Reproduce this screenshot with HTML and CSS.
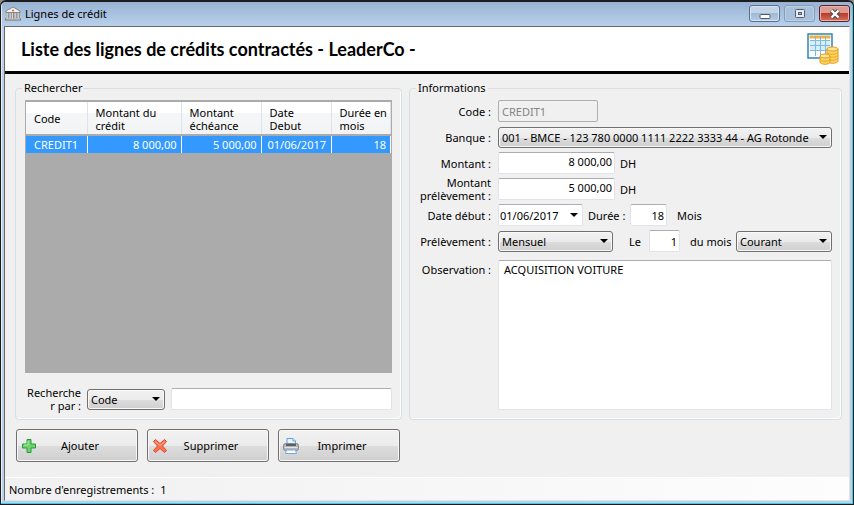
FILE: index.html
```html
<!DOCTYPE html>
<html lang="fr">
<head>
    <meta charset="UTF-8">
    <meta name="viewport" content="width=device-width, initial-scale=1.0">
    <title>Lignes de crédit</title>
    <link rel="stylesheet" href="styles.css">
</head>
<body>
    <div class="window">
        <header class="titlebar">
            <svg class="app-icon" viewBox="0 0 16 14">
                <path d="M8 0 L15 4 V5.500 H1 V4 Z" fill="#f4f1ec" stroke="#77706a" stroke-width=".8"/>
                <path d="M2.500 6v6M5.500 6v6M8 6v6M10.500 6v6M13.500 6v6" stroke="#77706a" stroke-width="2"/>
                <path d="M2.200 6v6M5.200 6v6M7.700 6v6M10.200 6v6M13.200 6v6" stroke="#f4f1ec" stroke-width="1"/>
                <path d="M0 12.500h16" stroke="#77706a" stroke-width="2"/>
                <path d="M1 12h14" stroke="#e4e0db"/>
                <circle cx="8" cy="3.500" r="1" fill="#b4674e"/>
            </svg>
            <span class="title">Lignes de crédit</span>
            <div class="window-buttons">
                <button type="button" class="win-btn" aria-label="Réduire">
                    <svg viewBox="0 0 12 12"><rect x="1" y="6.500" width="10" height="4" rx="1" fill="#fff" stroke="#555b69"/></svg>
                </button>
                <button type="button" class="win-btn dim" aria-label="Agrandir">
                    <svg viewBox="0 0 12 12"><rect x="1.500" y="1.500" width="9" height="8" rx="1" fill="#e6ecf3" stroke="#555b69"/><rect x="4.500" y="4.500" width="3" height="2" fill="#a9c1dc" stroke="#555b69"/></svg>
                </button>
                <button type="button" class="win-btn close" aria-label="Fermer">
                    <svg viewBox="0 0 12 12"><path d="M2.500 2.500l7 7M9.500 2.500l-7 7" stroke="#4c4a58" stroke-width="4.500"/><path d="M2.500 2.500l7 7M9.500 2.500l-7 7" stroke="#fff" stroke-width="2.400"/></svg>
                </button>
            </div>
        </header>

        <div class="client">
            <div class="banner">
                <h1>Liste des lignes de crédits contractés - LeaderCo -</h1>
                <svg class="banner-icon" viewBox="0 0 32 34">
                    <rect x="1" y="2" width="24" height="24" fill="#fff" stroke="#1c7fb8" stroke-width="1.400"/>
                    <rect x="3" y="9" width="20" height="9" fill="#d5eefb"/>
                    <rect x="2.500" y="3.500" width="21" height="3" fill="#f4b13e"/>
                    <path d="M3 8.500h20M3 13.500h20M3 18.500h20M8.500 4v20M13.500 4v20M18.500 4v20" stroke="#84b8da" fill="none"/>
                    <path d="M20 17v12c0 3 11 3 11 0V17" fill="#ffd45c" stroke="#e09b24"/>
                    <path d="M20 20c0 3 11 3 11 0M20 23c0 3 11 3 11 0M20 26c0 3 11 3 11 0" fill="none" stroke="#e8a52c"/>
                    <ellipse cx="25.500" cy="17" rx="5.500" ry="2" fill="#ffe88d" stroke="#e09b24"/>
                    <path d="M13 24v6c0 3 10 3 10 0v-6" fill="#ffd45c" stroke="#e09b24"/>
                    <path d="M13 27c0 3 10 3 10 0" fill="none" stroke="#e8a52c"/>
                    <ellipse cx="18" cy="24" rx="5" ry="2" fill="#ffe88d" stroke="#e09b24"/>
                </svg>
            </div>

            <main class="content">
                <div class="groups">
                    <fieldset class="group">
                        <legend>Rechercher</legend>
                        <div class="table-area">
                            <table class="credits">
                                <colgroup>
                                    <col class="col-code">
                                    <col class="col-amount">
                                    <col class="col-due">
                                    <col class="col-date">
                                    <col>
                                </colgroup>
                                <thead>
                                    <tr>
                                        <th>Code</th>
                                        <th>Montant du crédit</th>
                                        <th>Montant échéance</th>
                                        <th class="date-head">Date Debut</th>
                                        <th>Durée en mois</th>
                                    </tr>
                                </thead>
                                <tbody>
                                    <tr class="selected">
                                        <td>CREDIT1</td>
                                        <td class="num">8 000,00</td>
                                        <td class="num">5 000,00</td>
                                        <td class="date">01/06/2017</td>
                                        <td class="num">18</td>
                                    </tr>
                                </tbody>
                            </table>
                        </div>
                        <div class="search">
                            <label for="searchBy">Rechercher par :</label>
                            <select id="searchBy" class="combo">
                                <option>Code</option>
                            </select>
                            <input type="text" class="field" aria-label="Texte à rechercher">
                        </div>
                    </fieldset>

                    <fieldset class="group">
                        <legend>Informations</legend>
                        <div class="form">
                            <label for="code">Code :</label>
                            <div class="row">
                                <input type="text" id="code" class="field code" value="CREDIT1" disabled>
                            </div>

                            <label for="bank">Banque :</label>
                            <div class="row">
                                <select id="bank" class="combo bank">
                                    <option>001 - BMCE - 123 780 0000 1111 2222 3333 44 - AG Rotonde</option>
                                </select>
                            </div>

                            <label for="amount">Montant :</label>
                            <div class="row">
                                <input type="text" id="amount" class="field amount" value="8 000,00">
                                <span class="unit">DH</span>
                            </div>

                            <label for="debit">Montant prélèvement :</label>
                            <div class="row">
                                <input type="text" id="debit" class="field amount" value="5 000,00">
                                <span class="unit">DH</span>
                            </div>

                            <label for="start">Date début :</label>
                            <div class="row">
                                <div class="field date-picker">
                                    <input type="text" id="start" value="01/06/2017">
                                    <button type="button" aria-label="Ouvrir le calendrier"></button>
                                </div>
                                <label for="months" class="after-date">Durée :</label>
                                <input type="text" id="months" class="field months" value="18">
                                <span class="months-unit">Mois</span>
                            </div>

                            <label for="period">Prélèvement :</label>
                            <div class="row">
                                <select id="period" class="combo period">
                                    <option>Mensuel</option>
                                </select>
                                <label for="day" class="day-label">Le</label>
                                <input type="text" id="day" class="field day" value="1">
                                <label for="which" class="which-label">du mois</label>
                                <select id="which" class="combo which">
                                    <option>Courant</option>
                                </select>
                            </div>

                            <label for="notes" class="notes-label">Observation :</label>
                            <textarea id="notes" class="field notes">ACQUISITION VOITURE</textarea>
                        </div>
                    </fieldset>
                </div>

                <div class="actions">
                    <button type="button" class="action">
                        <svg viewBox="0 0 16 16"><path d="M6 1.500h4V6h4.500v4H10v4.500H6V10H1.500V6H6z" fill="#6fd26b" stroke="#27983a" stroke-linejoin="round"/><path d="M7 3v4H3" fill="none" stroke="#a9eca0"/></svg>
                        <span>Ajouter</span>
                    </button>
                    <button type="button" class="action">
                        <svg viewBox="0 0 16 16"><path d="M1.500 3.500l2-2L8 5.500l4.500-4 2 2-4 4.500 4 4.500-2 2-4.500-4-4.500 4-2-2 4-4.500z" fill="#ff7050" stroke="#df452d" stroke-linejoin="round"/><path d="M3 3.500l5 4 5-4" fill="none" stroke="#ffb39c"/></svg>
                        <span>Supprimer</span>
                    </button>
                    <button type="button" class="action">
                        <svg viewBox="0 0 16 16"><path d="M4 7V.500h6L12.500 3v4z" fill="#e8f4ff" stroke="#5f9fd8"/><path d="M10 .500V3h2.500" fill="#fff" stroke="#5f9fd8"/><rect x=".5" y="5.500" width="15" height="7" rx="2" fill="#b4b6b9" stroke="#85888d"/><path d="M3 6h10v2H3z" fill="#5b5e63"/><path d="M1.500 9.500h13" stroke="#e4e5e6"/><path d="M3.500 12h9l1 3.500h-11z" fill="#fff" stroke="#74aadb"/></svg>
                        <span>Imprimer</span>
                    </button>
                </div>
            </main>

            <footer class="statusbar">
                <span>Nombre d'enregistrements :</span>
                <span>1</span>
            </footer>
        </div>
    </div>
</body>
</html>
```
FILE: styles.css
```css
* {
    margin: 0;
    padding: 0;
    box-sizing: border-box;
}

body {
    font-family: "Noto Sans", "Open Sans", sans-serif;
    font-size: 11px;
    line-height: 13px;
    color: #000;
    background: #8c8c8c;
}

button,
input,
select,
textarea {
    font: inherit;
    color: inherit;
}

/* Window frame */
.window {
    display: flex;
    flex-direction: column;
    min-height: 100vh;
    padding: 0 3px 3px;
    border: 1px solid #1c1c1c;
    border-top-width: 2px;
    border-radius: 6px 6px 0 0;
    background: #b9d1ea;
    box-shadow: inset -1px -1px 0 #35cdf0, inset 1px 0 0 #e3edf7;
}

.titlebar {
    display: flex;
    align-items: center;
    height: 24px;
    margin: 0 -2px;
    padding: 0 2px 1px 3px;
    background: linear-gradient(#98b3d2, #b8d0ea);
    border-radius: 4px 4px 0 0;
}

.app-icon {
    width: 16px;
    height: 14px;
}

.title {
    flex: 1;
    padding-left: 4px;
}

.window-buttons {
    display: flex;
    gap: 4px;
}

.win-btn {
    display: flex;
    align-items: center;
    justify-content: center;
    width: 31px;
    height: 17px;
    border: 1px solid #5a6f8a;
    border-radius: 3px;
    background: linear-gradient(#c3d4e8 50%, #9fb9d6 50%, #b5cce6);
    box-shadow: inset 0 0 0 1px #d6e3f1;
}

.win-btn svg {
    width: 12px;
    height: 12px;
}

.win-btn.dim {
    border-color: #869dba;
    background: #a9c1dd;
    box-shadow: inset 0 0 0 1px #bdd0e6;
}

.win-btn.close {
    border-color: #5b2326;
    background: linear-gradient(#dd9a90 45%, #b83c2d 50%, #d3705a);
    box-shadow: inset 0 0 0 1px #e5b5ad;
}

/* Client area */
.client {
    flex: 1;
    display: flex;
    flex-direction: column;
    border: 1px solid #696969;
    border-right-color: #e3e3e3;
    border-bottom-color: #e3e3e3;
    background: #f0f0f0;
}

.banner {
    display: flex;
    align-items: center;
    justify-content: space-between;
    height: 47px;
    padding: 0 10px 0 16px;
    background: #fff;
    border-bottom: 3px solid #000;
}

.banner h1 {
    font-family: Lato, sans-serif;
    font-size: 18px;
    font-weight: 700;
    line-height: 22px;
}

.banner-icon {
    width: 32px;
    height: 34px;
}

.content {
    flex: 1;
    display: flex;
    flex-direction: column;
    gap: 9px;
    padding: 7px 7px 15px 10px;
}

.groups {
    flex: 1;
    display: grid;
    grid-template-columns: 387fr 433fr;
    gap: 7px;
}

.group {
    display: flex;
    flex-direction: column;
    min-width: 0;
    padding: 5px 9px 9px;
    border: 1px solid #d5dfe5;
    border-radius: 4px;
    box-shadow: inset -1px -1px 0 #fff;
}

.group legend {
    padding: 0 2px;
    margin-left: -3px;
    line-height: 14px;
}

/* Credit list */
.table-area {
    flex: 1;
    padding: 2px 1px;
    background: #ababab;
}

.credits {
    width: 100%;
    table-layout: fixed;
    border-collapse: collapse;
}

.col-code {
    width: 61px;
}

.col-amount {
    width: 94px;
}

.col-due {
    width: 80px;
}

.col-date {
    width: 70px;
}

.credits th {
    height: 33px;
    padding: 2px 0 1px 8px;
    font-weight: 400;
    text-align: left;
    vertical-align: middle;
    background: linear-gradient(#fff 35%, #f5f6f8 36%, #f2f3f5);
    border-right: 1px solid #dfe3e8;
    border-bottom: 2px solid #ababab;
}

.credits .date-head {
    padding-right: 20px;
}

.credits td {
    height: 18px;
    padding: 2px 4px 2px 8px;
    color: #fff;
    border-right: 1px solid #fff;
}

.credits .selected {
    background: #3399ff;
}

.credits .num {
    text-align: right;
}

.credits .date {
    padding: 2px 0 2px 6px;
}

.search {
    display: flex;
    align-items: center;
    height: 22px;
    margin-top: 15px;
}

.search label {
    width: 56px;
    text-align: right;
    overflow-wrap: anywhere;
}

.search .combo {
    width: 78px;
    margin: 0 6px;
}

.search .field {
    flex: 1;
}

/* Controls */
.field {
    height: 22px;
    min-width: 0;
    padding: 0 4px;
    background: #fff;
    border: 1px solid #e2e3ea;
    border-top-color: #abadb3;
    border-radius: 2px;
}

.combo {
    appearance: none;
    height: 21px;
    padding: 0 20px 0 3px;
    border: 1px solid #707070;
    border-radius: 3px;
    background: url("data:image/svg+xml,%3Csvg xmlns='http://www.w3.org/2000/svg' width='8' height='4'%3E%3Cpath d='M0 0h8L4 4z'/%3E%3C/svg%3E") right 4px center no-repeat, linear-gradient(#f2f2f2, #ebebeb 50%, #dddddd 51%, #cfcfcf);
    box-shadow: inset 0 0 0 1px #f8f8f8;
}

/* Details form */
.form {
    flex: 1;
    display: grid;
    grid-template-columns: 72px 1fr;
    grid-template-rows: repeat(6, 22px) 1fr;
    gap: 4px 7px;
    align-items: center;
}

.form > label {
    text-align: right;
}

.row {
    display: flex;
    align-items: center;
}

.code {
    width: 100px;
}

.code:disabled {
    padding: 0 3px;
    color: #838383;
    background: #f0f0f0;
    border-color: #afafaf;
}

.bank {
    flex: 1;
    min-width: 0;
}

.amount {
    width: 117px;
    padding: 0 2px 4px;
    text-align: right;
}

.unit {
    padding-left: 5px;
}

.date-picker {
    display: flex;
    align-items: center;
    width: 85px;
    padding: 0 4px 0 1px;
}

.date-picker input {
    flex: 1;
    min-width: 0;
    border: 0;
    background: none;
}

.date-picker button {
    width: 8px;
    height: 4px;
    border: 0;
    background: #000;
    clip-path: polygon(0 0, 100% 0, 50% 100%);
}

.after-date {
    padding-left: 5px;
}

.months {
    width: 37px;
    margin-left: auto;
    padding: 0 2px;
    text-align: right;
}

.months-unit {
    width: 165px;
    padding-left: 10px;
}

.period {
    width: 115px;
}

.day-label {
    padding-left: 16px;
}

.day {
    width: 31px;
    margin-left: auto;
    padding: 0 2px;
    text-align: right;
}

.which-label {
    width: 56px;
    padding-left: 10px;
}

.which {
    width: 96px;
}

.notes-label {
    align-self: start;
    padding-top: 7px;
}

.form .notes {
    align-self: stretch;
    height: auto;
    margin-top: 4px;
    padding: 2px 5px;
    resize: none;
}

/* Buttons under the groups */
.actions {
    display: flex;
    gap: 9px;
    padding-left: 1px;
}

.action {
    display: flex;
    align-items: center;
    width: 122px;
    height: 33px;
    padding: 0 14px 0 4px;
    border: 1px solid #707070;
    border-radius: 3px;
    background: linear-gradient(#f2f2f2, #ebebeb 50%, #dddddd 51%, #cfcfcf);
    box-shadow: inset 0 0 0 1px #f8f8f8;
}

.action svg {
    width: 16px;
    height: 16px;
}

.action span {
    flex: 1;
    text-align: center;
}

.statusbar {
    display: flex;
    gap: 6px;
    padding: 5px 4px 4px;
    border-top: 1px solid #fff;
    background: linear-gradient(to right, #f0f0f0, #fdfdfd);
}
```
